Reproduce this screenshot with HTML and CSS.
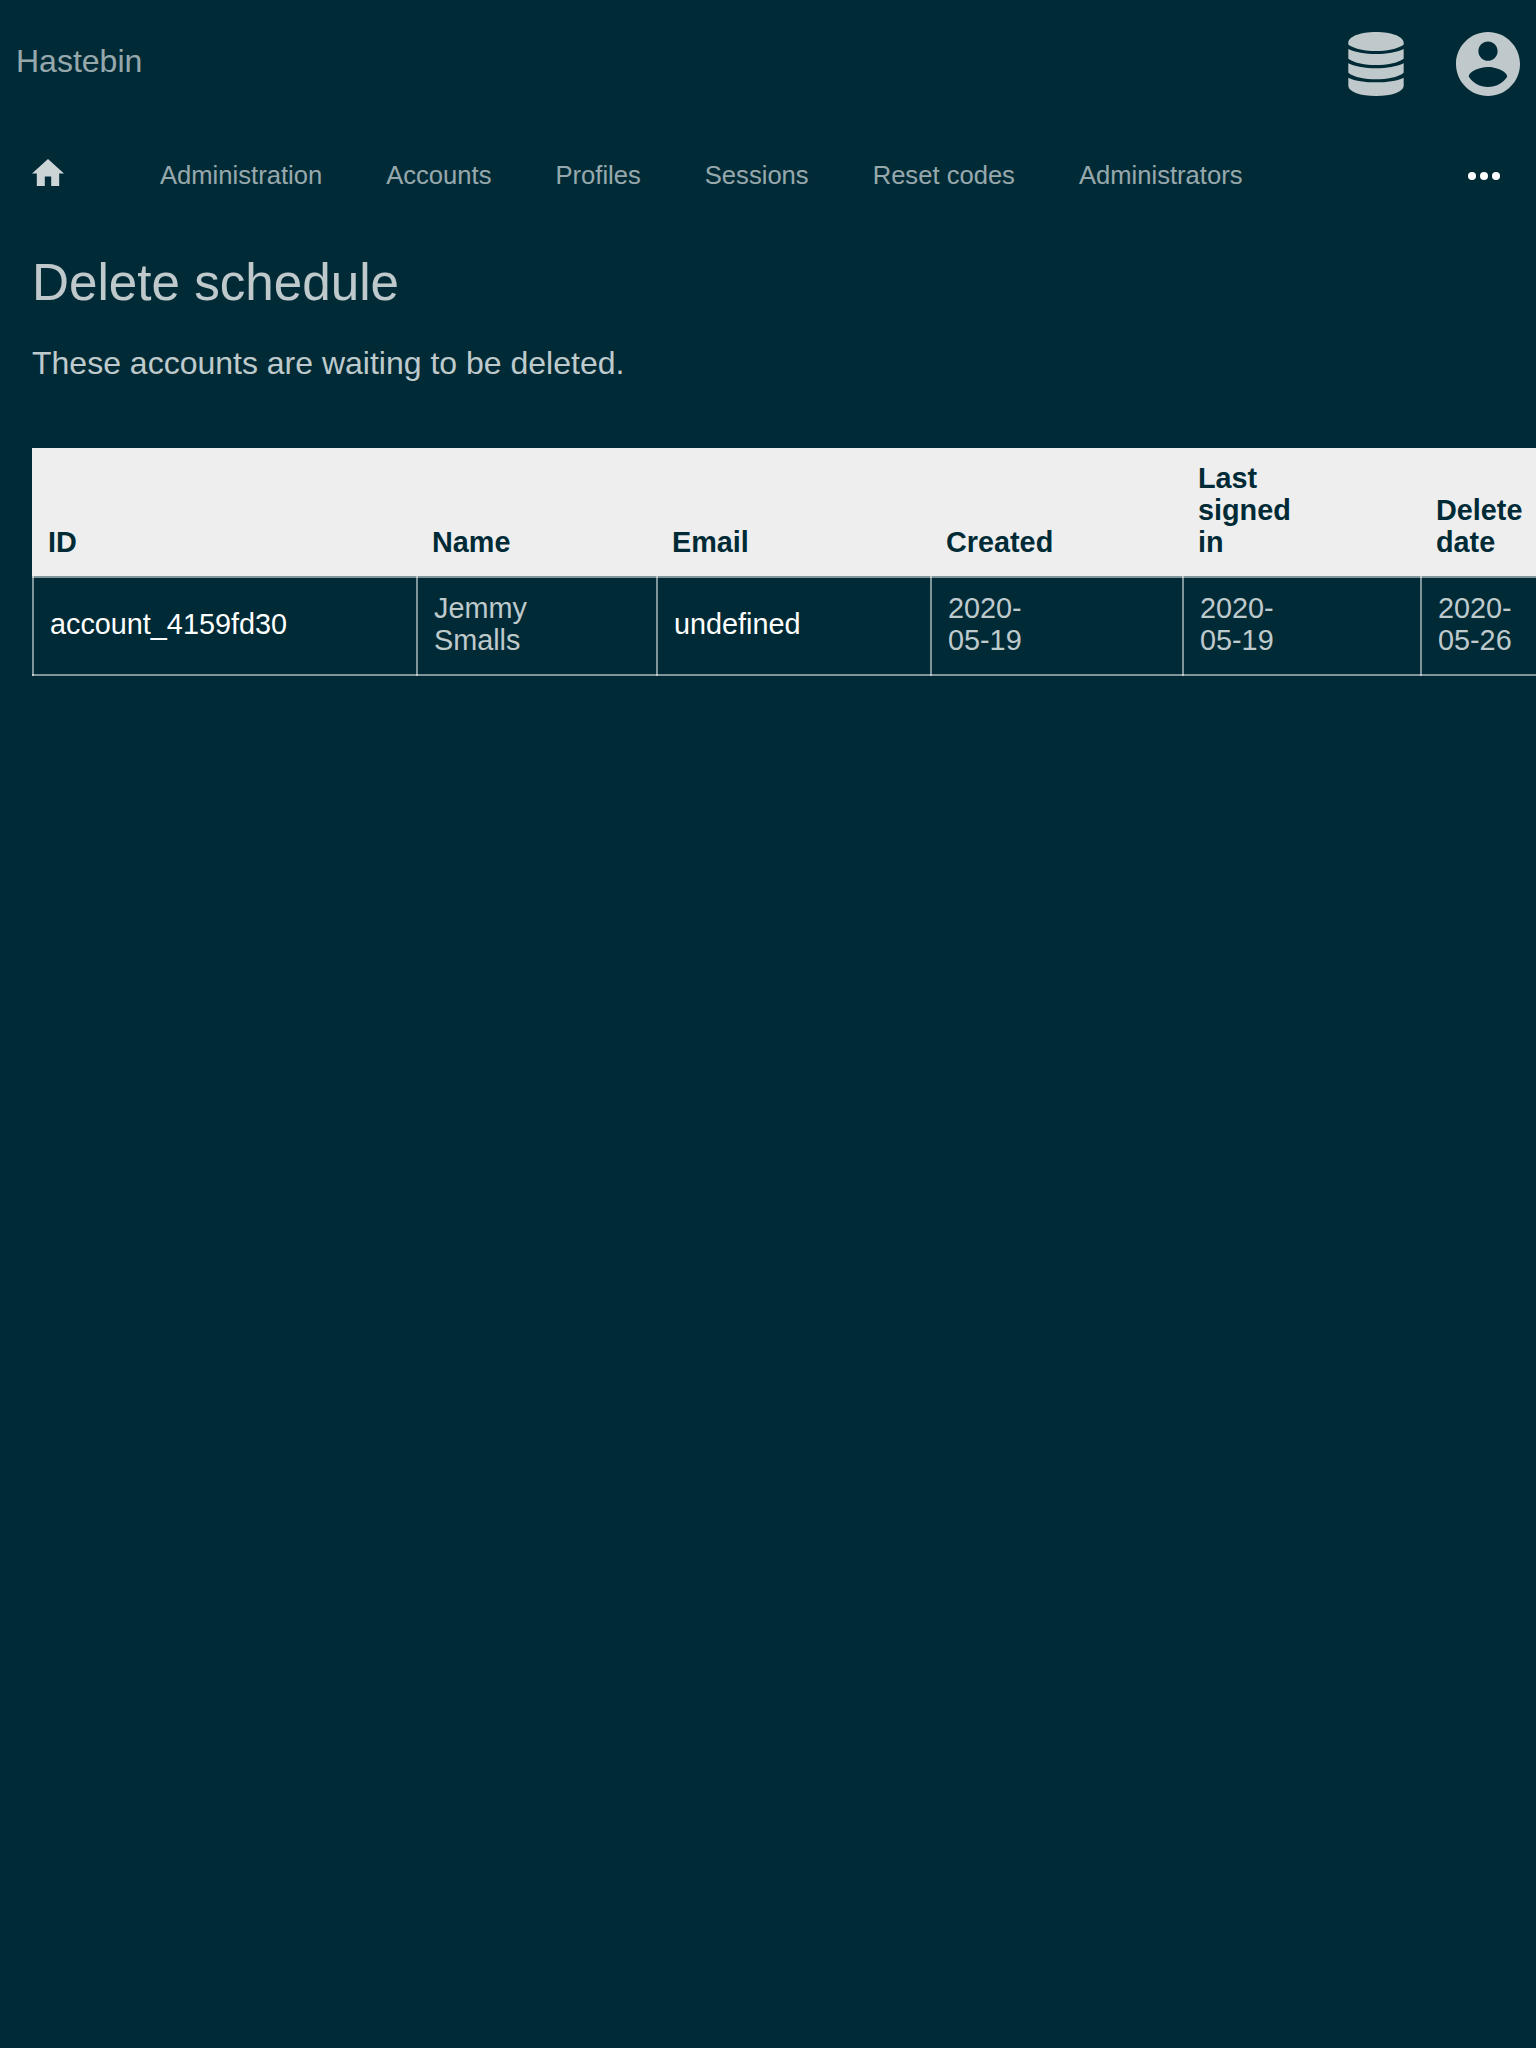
FILE: index.html
```html
<!DOCTYPE html>
<html lang="en">
<head>
<meta charset="utf-8">
<title>Delete schedule</title>
<link rel="stylesheet" href="styles.css">
</head>
<body>
<header class="header">
  <a class="brand">Hastebin</a>
  <div class="menus">
    <svg class="icon-database" viewBox="-1 0 170 192" preserveAspectRatio="none"><path d="M84 0C132 0 168 14 168 32V38C148 51 116 57 84 57S20 51 0 38V32C0 14 36 0 84 0ZM0 51C22 61 50 66 84 66S146 61 168 51V80C150 93 116 99 84 99S18 93 0 80ZM0 94C22 104 50 109 84 109S146 104 168 94V122C150 136 116 142 84 142S18 136 0 122ZM0 137C22 147 50 151 84 151S146 147 168 137V162C166 180 132 192 84 192S2 180 0 162Z"/></svg>
    <svg class="icon-account" viewBox="2 2 20 20"><path d="M12 2C6.48 2 2 6.48 2 12s4.480 10 10 10 10-4.480 10-10S17.520 2 12 2zm0 3c1.660 0 3 1.340 3 3s-1.340 3-3 3-3-1.340-3-3 1.340-3 3-3zm0 14.200c-2.500 0-4.710-1.280-6-3.220.03-1.990 4-3.080 6-3.080 1.990 0 5.970 1.090 6 3.080-1.290 1.940-3.500 3.220-6 3.220z"/></svg>
  </div>
</header>
<nav class="nav">
  <svg class="icon-home" viewBox="2 3 20 17"><path d="M10 20v-6h4v6h5v-8h3L12 3 2 12h3v8z"/></svg>
  <a>Administration</a>
  <a>Accounts</a>
  <a>Profiles</a>
  <a>Sessions</a>
  <a>Reset codes</a>
  <a>Administrators</a>
  <svg class="icon-more" viewBox="0 0 32 8"><circle cx="4" cy="4" r="4"/><circle cx="16" cy="4" r="4"/><circle cx="28" cy="4" r="4"/></svg>
</nav>
<main class="content">
  <h1>Delete schedule</h1>
  <p>These accounts are waiting to be deleted.</p>
  <table>
    <colgroup><col class="col-id"><col class="col-name"><col class="col-email"><col class="col-created"><col class="col-signin"><col class="col-delete"></colgroup>
    <thead>
      <tr><th>ID</th><th>Name</th><th>Email</th><th>Created</th><th>Last<br>signed<br>in</th><th>Delete<br>date</th></tr>
    </thead>
    <tbody>
      <tr><td><a>account_4159fd30</a></td><td>Jemmy<br>Smalls</td><td><a>undefined</a></td><td>2020-<br>05-19</td><td>2020-<br>05-19</td><td>2020-<br>05-26</td></tr>
    </tbody>
  </table>
</main>
</body>
</html>
```
FILE: styles.css
```css
* { box-sizing: border-box; }
html { background: #002b36; }
body {
  margin: 0;
  min-height: 2048px;
  background: #002b36;
  color: rgba(255, 255, 255, .75);
  font: 32px/36px "Liberation Sans", Arial, sans-serif;
}
svg { display: block; fill: currentColor; }
.header {
  display: flex;
  align-items: center;
  justify-content: space-between;
  height: 128px;
  padding: 0 16px;
}
.brand { padding-bottom: 6px; color: rgba(255, 255, 255, .6); }
.menus { display: flex; gap: 52px; }
.icon-database { width: 56px; height: 64px; }
.icon-account { width: 64px; height: 64px; }
.nav {
  display: flex;
  align-items: center;
  gap: 64px;
  height: 96px;
  padding: 0 36px 0 32px;
  font-size: 25.6px;
  line-height: 30px;
  color: rgba(255, 255, 255, .6);
}
.nav a { padding-bottom: 2px; }
.icon-home {
  width: 32px;
  height: 27.2px;
  margin: 0 32px 7.2px 0;
  color: rgba(255, 255, 255, .8);
}
.icon-more { width: 32px; height: 8px; margin-left: auto; color: #fff; }
.content { padding: 29px 0 0 32px; overflow: hidden; }
h1 { margin: 0; font-size: 51.2px; font-weight: 400; line-height: 60px; }
p { margin: 32px 0 67px; }
table {
  width: 1626px;
  border-spacing: 0;
  table-layout: fixed;
  font-size: 28.8px;
  line-height: 32px;
}
.col-id { width: 384px; }
.col-name { width: 240px; }
.col-email { width: 274px; }
.col-created { width: 252px; }
.col-signin { width: 238px; }
.col-delete { width: 238px; }
th {
  padding: 14px 16px 18px;
  background: #eee;
  color: #002b36;
  text-align: left;
  vertical-align: bottom;
}
/* Translucent rules overlap at the corners. */
td {
  --rule: linear-gradient(rgba(255, 255, 255, .5), rgba(255, 255, 255, .5));
  padding: 16px 18px 20px;
  background:
    var(--rule) left / 2px 100% no-repeat,
    var(--rule) top / 100% 2px no-repeat,
    var(--rule) bottom / 100% 2px no-repeat;
}
td a { color: #fff; }
```
